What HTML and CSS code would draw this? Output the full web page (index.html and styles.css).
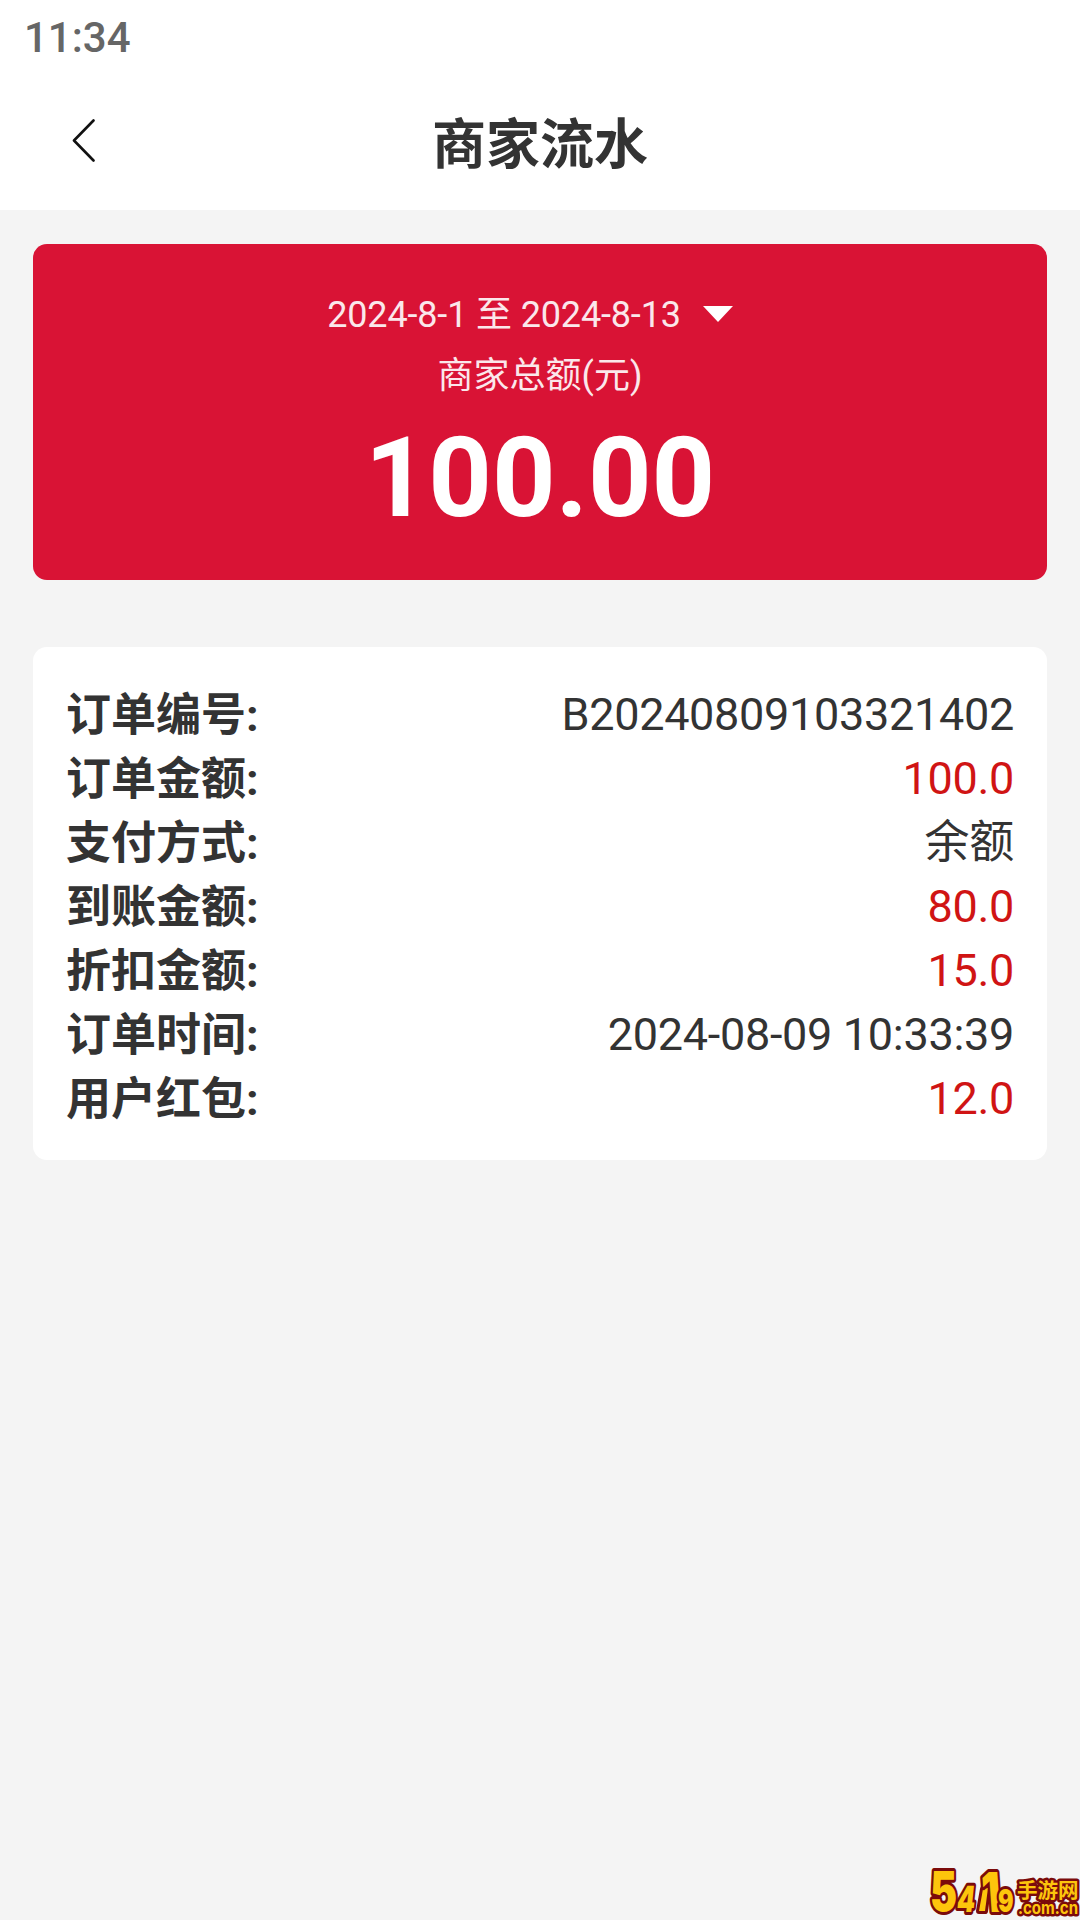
FILE: index.html
```html
<!DOCTYPE html>
<html lang="zh-CN">
<head>
<meta charset="utf-8">
<title>商家流水</title>
<link rel="stylesheet" href="styles.css">
</head>
<body>
<header class="top">
  <div class="status">11:34</div>
  <nav class="nav">
    <svg class="back" viewBox="0 0 24 44" aria-hidden="true"><path d="M21.5 1.5L2 21.5L21.5 41.5"/></svg>
    <h1 class="title">商家流水</h1>
  </nav>
</header>
<main class="content">
  <section class="summary">
    <div class="period"><span>2024-8-1 至 2024-8-13</span><svg class="caret" viewBox="0 0 30 16" aria-hidden="true"><path d="M0 0H30L15 16Z"/></svg></div>
    <div class="caption">商家总额(元)</div>
    <div class="total">100.00</div>
  </section>
  <dl class="order">
    <div class="row"><dt>订单编号:</dt><dd>B20240809103321402</dd></div>
    <div class="row"><dt>订单金额:</dt><dd class="money">100.0</dd></div>
    <div class="row"><dt>支付方式:</dt><dd>余额</dd></div>
    <div class="row"><dt>到账金额:</dt><dd class="money">80.0</dd></div>
    <div class="row"><dt>折扣金额:</dt><dd class="money">15.0</dd></div>
    <div class="row"><dt>订单时间:</dt><dd>2024-08-09 10:33:39</dd></div>
    <div class="row"><dt>用户红包:</dt><dd class="money">12.0</dd></div>
  </dl>
</main>
<svg class="brand" viewBox="0 0 154 56" aria-label="5419手游网">
  <g class="brand-num">
    <text transform="translate(4 47) scale(.74 1)" font-size="55">5</text>
    <text transform="translate(30 48) skewX(-6) scale(.72 1)" font-size="36">4</text>
    <path d="M57 25L62 24L59 47H53Z"/>
    <text transform="translate(57 48) skewX(4) scale(.76 1)" font-size="55">1</text>
    <text transform="translate(72 48) scale(.72 1)" font-size="32">9</text>
  </g>
  <text class="brand-cn" x="91" y="34" font-size="20.5">手游网</text>
  <text class="brand-url" x="92" y="50" font-size="17" textLength="60" lengthAdjust="spacingAndGlyphs">.com.cn</text>
</svg>
</body>
</html>
```
FILE: styles.css
```css
* { box-sizing: border-box; }
body {
  margin: 0;
  height: 1920px;
  overflow: hidden;
  position: relative;
  background: #f4f4f4;
  color: #333;
  font-family: Roboto, "Noto Sans CJK SC", sans-serif;
}
.top { height: 210px; background: #fff; display: flex; flex-direction: column; }
.status { height: 76px; padding-left: 24px; font-size: 42px; line-height: 76px; font-weight: 500; color: #666; }
.nav { height: 134px; display: grid; grid-template-columns: 170px 1fr 170px; align-items: center; }
.back { width: 24px; height: 44px; margin-left: 72px; margin-top: -4px; fill: none; stroke: #111; stroke-width: 2.6; stroke-linecap: round; stroke-linejoin: round; }
.title { margin: 5px 0 0; text-align: center; font-size: 54px; line-height: 80px; font-weight: 700; }
.content { padding: 34px 33px; display: flex; flex-direction: column; gap: 67px; }
.summary { height: 336px; padding-top: 36px; border-radius: 14px; background: #d91335; color: #fff; display: flex; flex-direction: column; align-items: center; }
.period { height: 61px; display: flex; align-items: center; gap: 22px; font-size: 36px; letter-spacing: -.15px; margin-left: -20px; }
.period span, .caption { opacity: .9; }
.caret { width: 30px; height: 16px; margin-top: 6px; fill: #fff; }
.caption { height: 61px; margin-top: 5px; line-height: 61px; font-size: 36px; }
.total { margin-top: 6px; font-size: 111px; line-height: 130px; font-weight: 700; }
.order { margin: 0; height: 513px; padding: 36px 33px; border-radius: 14px; background: #fff; font-size: 45px; }
.row { height: 64px; display: flex; align-items: center; justify-content: space-between; line-height: 64px; }
dt { font-weight: 700; padding-top: 1px; }
dd { margin: 0; letter-spacing: -.3px; }
.money { color: #d01414; }
.brand { position: absolute; right: 0; bottom: 0; width: 154px; height: 56px; overflow: visible; fill: #fdc50c; stroke: #7b0b0b; paint-order: stroke; stroke-linejoin: round; }
.brand-num { font-family: Inter, sans-serif; font-weight: 900; stroke-width: 6px; }
.brand-cn { font-family: "Noto Sans CJK SC", sans-serif; font-weight: 700; stroke-width: 5px; }
.brand-url { font-family: Inter, sans-serif; font-weight: 700; stroke-width: 5px; }
```
